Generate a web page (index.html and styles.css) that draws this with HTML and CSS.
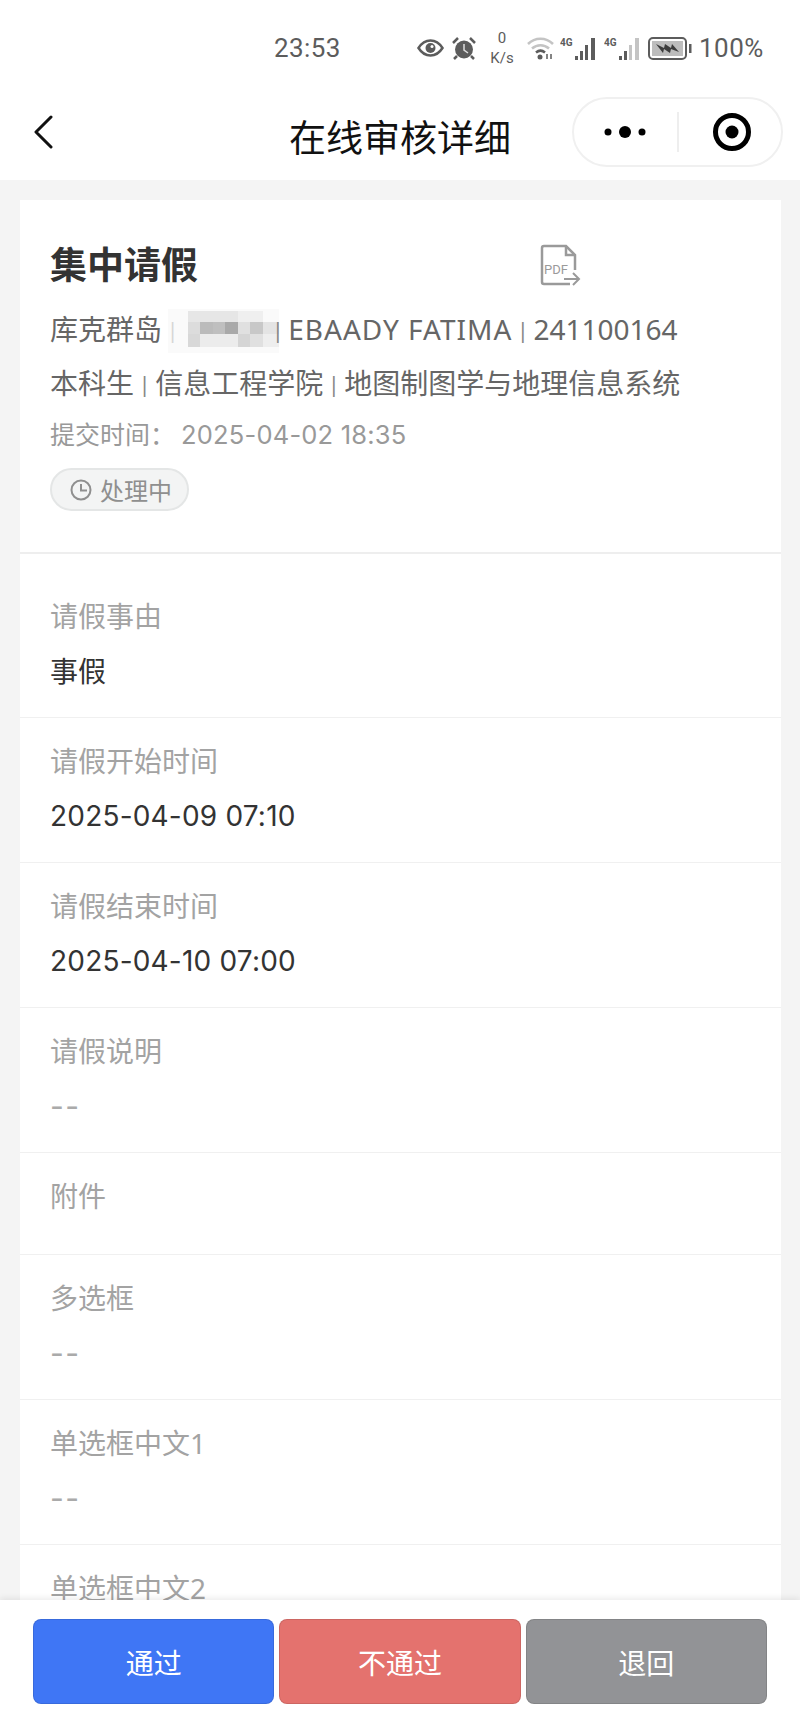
FILE: index.html
```html
<!DOCTYPE html>
<html lang="zh-CN">
<head>
    <meta charset="UTF-8">
    <meta name="viewport" content="width=device-width, initial-scale=1.0">
    <title>在线审核详细</title>
    <link rel="stylesheet" href="styles.css">
</head>
<body>
    <div class="page">
        <div class="status-bar">
            <span class="clock-time">23:53</span>
            <div class="status-icons">
                <svg class="ic-eye" width="27" height="18" viewBox="0 0 27 18"><path d="M1.5 9C5 3.5 9 1.5 13.5 1.5S22 3.5 25.500 9C22 14.500 18 16.500 13.500 16.500S5 14.500 1.500 9Z" fill="none" stroke="#5c5c5c" stroke-width="2.500"/><circle cx="13.500" cy="9" r="5" fill="#5c5c5c"/><circle cx="15" cy="7.500" r="1.500" fill="#fff"/></svg>
                <svg class="ic-alarm" width="24" height="23" viewBox="0 0 24 23"><circle cx="12" cy="12.500" r="9" fill="#5c5c5c"/><path d="M12 7v6l4 3" fill="none" stroke="#ddd" stroke-width="1.500"/><path d="M1 6l5-5M23 6l-5-5M5 19l-3 3M19 19l3 3" stroke="#5c5c5c" stroke-width="2.500"/></svg>
                <div class="net-speed"><span>0</span><span>K/s</span></div>
                <svg class="ic-wifi" width="27" height="24" viewBox="0 0 27 24"><path d="M1 8C8 1 19 1 26 8M5 12.500C10 8 17 8 22 12.500" fill="none" stroke="#c4c4c4" stroke-width="2.500"/><path d="M9 16.500c3-2.500 6-2.500 9 0" fill="none" stroke="#5c5c5c" stroke-width="2.500"/><circle cx="13" cy="21" r="2.500" fill="#5c5c5c"/><path d="M20 18v5M24 18v5" stroke="#5c5c5c" stroke-width="1.500"/></svg>
                <svg class="ic-signal" width="37" height="23" viewBox="0 0 37 23"><text x="0" y="9" class="sig-label">4G</text><path d="M15 19h3v4h-3zM20 14h3v9h-3zM25 8h3v15h-3zM31 1h4v22h-4z" fill="#5c5c5c"/></svg>
                <svg class="ic-signal" width="37" height="23" viewBox="0 0 37 23"><text x="0" y="9" class="sig-label">4G</text><path d="M15 19h3v4h-3zM20 14h3v9h-3z" fill="#5c5c5c"/><path d="M25 8h3v15h-3zM31 1h4v22h-4z" fill="#c4c4c4"/></svg>
                <svg class="ic-battery" width="44" height="23" viewBox="0 0 44 23"><rect x="1" y="1" width="37" height="21" rx="4" fill="none" stroke="#5c5c5c" stroke-width="2"/><rect x="4" y="4" width="31" height="15" fill="#bdbdbd"/><path d="M8 7l8 4 1-4 6 4 1-4 7 8-8-3-1 4-6-4-1 4z" fill="#3c3c3c"/><rect x="41" y="7" width="2.500" height="9" fill="#5c5c5c"/></svg>
                <span class="battery-text">100%</span>
            </div>
        </div>

        <div class="nav-bar">
            <svg class="back-icon" width="20" height="34" viewBox="0 0 20 34"><path d="M18 2L3 17l15 15" fill="none" stroke="#111" stroke-width="3" stroke-linecap="round" stroke-linejoin="round"/></svg>
            <h1 class="nav-title">在线审核详细</h1>
            <div class="capsule">
                <svg width="42" height="14" viewBox="0 0 42 14"><circle cx="4" cy="7" r="3.500"/><circle cx="21" cy="7" r="6"/><circle cx="38" cy="7" r="3.500"/></svg>
                <span class="capsule-line"></span>
                <svg width="40" height="40" viewBox="0 0 40 40"><circle cx="20" cy="20" r="16.500" fill="none" stroke="#000" stroke-width="5"/><circle cx="20" cy="20" r="6.500"/></svg>
            </div>
        </div>

        <div class="content">
            <div class="card">
                <div class="summary">
                    <div class="title-row">
                        <h2 class="leave-title">集中请假</h2>
                        <svg class="pdf-icon" width="42" height="42" viewBox="0 0 42 42">
                            <path d="M35 26V11L26 2H4a2 2 0 0 0-2 2v34a2 2 0 0 0 2 2h26" fill="none" stroke="#9a9a9a" stroke-width="2.500"/>
                            <path d="M26 2v9h9" fill="none" stroke="#9a9a9a" stroke-width="2.500"/>
                            <text x="4" y="30" class="pdf-text">PDF</text>
                            <path d="M24 35h15M33 29l6 6-6 6" fill="none" stroke="#9a9a9a" stroke-width="2"/>
                        </svg>
                    </div>
                    <p class="meta">库克群岛<span class="sep">|</span><svg class="mosaic" width="84" height="44" viewBox="0 0 84 44">
                        <rect x="-15" y="2" width="111" height="44" fill="#f8f8f8" fill-opacity="0.7"/>
                        <rect x="5" y="4" width="50" height="11" fill="#e6e6e6"/>
                        <rect x="55" y="4" width="25" height="11" fill="#efefef"/>
                        <rect x="5" y="15" width="12" height="12" fill="#dcdcdc"/>
                        <rect x="17" y="15" width="13" height="12" fill="#bbb"/>
                        <rect x="30" y="15" width="12" height="12" fill="#bfbfbf"/>
                        <rect x="42" y="15" width="13" height="12" fill="#a9a9a9"/>
                        <rect x="55" y="15" width="12" height="12" fill="#e0e0e0"/>
                        <rect x="67" y="15" width="13" height="12" fill="#c8c8c8"/>
                        <rect x="80" y="15" width="16" height="12" fill="#e4e4e4"/>
                        <rect x="5" y="27" width="12" height="13" fill="#d8d8d8"/>
                        <rect x="17" y="27" width="38" height="13" fill="#ececec"/>
                        <rect x="55" y="27" width="12" height="13" fill="#d5d5d5"/>
                        <rect x="67" y="27" width="13" height="13" fill="#e0e0e0"/>
                        <rect x="80" y="27" width="16" height="13" fill="#eee"/>
                    </svg><span class="sep">|</span><span class="latin">EBAADY FATIMA</span><span class="sep">|</span>241100164</p>
                    <p class="meta">本科生<span class="sep">|</span>信息工程学院<span class="sep">|</span>地图制图学与地理信息系统</p>
                    <p class="submit-time">提交时间：<span class="digits">2025-04-02 18:35</span></p>
                    <div class="tag">
                        <svg width="22" height="22" viewBox="0 0 22 22"><circle cx="11" cy="11" r="9.500" fill="none" stroke="#8f8f8f" stroke-width="2"/><path d="M11 5v6.500h6" fill="none" stroke="#8f8f8f" stroke-width="2"/></svg>
                        <span>处理中</span>
                    </div>
                </div>

                <div class="row row-first">
                    <div class="row-label">请假事由</div>
                    <div class="row-value">事假</div>
                </div>
                <div class="row">
                    <div class="row-label">请假开始时间</div>
                    <div class="row-value digits">2025-04-09 07:10</div>
                </div>
                <div class="row">
                    <div class="row-label">请假结束时间</div>
                    <div class="row-value digits">2025-04-10 07:00</div>
                </div>
                <div class="row">
                    <div class="row-label">请假说明</div>
                    <div class="row-value empty">--</div>
                </div>
                <div class="row row-file">
                    <div class="row-label">附件</div>
                </div>
                <div class="row">
                    <div class="row-label">多选框</div>
                    <div class="row-value empty">--</div>
                </div>
                <div class="row">
                    <div class="row-label">单选框中文1</div>
                    <div class="row-value empty">--</div>
                </div>
                <div class="row">
                    <div class="row-label">单选框中文2</div>
                    <div class="row-value empty">--</div>
                </div>
            </div>
        </div>

        <div class="footer">
            <button class="btn btn-pass">通过</button>
            <button class="btn btn-fail">不通过</button>
            <button class="btn btn-back">退回</button>
        </div>
    </div>
</body>
</html>
```

FILE: styles.css
```css
html, body {
    margin: 0;
    padding: 0;
}
body {
    font-family: "Noto Sans", "Noto Sans CJK SC", sans-serif;
    background-color: #f4f4f4;
    color: #333;
}
h1, h2, p {
    margin: 0;
    font-weight: normal;
}
.page {
    position: relative;
    width: 800px;
    height: 1722px;
    overflow: hidden;
}

/* status bar */
.status-bar {
    display: flex;
    align-items: center;
    height: 96px;
    padding-left: 274px;
    background-color: #fff;
    color: #5c5c5c;
    box-sizing: border-box;
}
.clock-time {
    font-family: Roboto, sans-serif;
    font-size: 26px;
    letter-spacing: 0.4px;
    width: 143px;
}
.status-icons {
    display: flex;
    align-items: center;
}
.ic-eye { margin-right: 8px; }
.ic-alarm { margin-right: 12px; }
.net-speed {
    display: flex;
    flex-direction: column;
    align-items: center;
    width: 28px;
    margin-right: 11px;
    font-family: Roboto, sans-serif;
    font-size: 15px;
    line-height: 20px;
}
.ic-wifi { margin-right: 6px; }
.ic-signal { margin-right: 7px; }
.ic-battery { margin-right: 7px; }
.sig-label {
    font-family: Roboto, sans-serif;
    font-size: 10px;
    font-weight: bold;
    fill: #5c5c5c;
}
.battery-text {
    font-family: Roboto, sans-serif;
    font-size: 26px;
    letter-spacing: 0.5px;
}

/* nav bar */
.nav-bar {
    position: relative;
    display: flex;
    align-items: center;
    justify-content: center;
    height: 84px;
    background-color: #fff;
}
.back-icon {
    position: absolute;
    left: 33px;
    top: 19px;
}
.nav-title {
    font-size: 37px;
    line-height: 50px;
    color: #111;
}
.capsule {
    position: absolute;
    left: 572px;
    top: 1px;
    display: flex;
    align-items: center;
    width: 211px;
    height: 70px;
    border: 2px solid #f0f0f0;
    border-radius: 36px;
    box-sizing: border-box;
    background-color: #fff;
    padding-left: 30px;
}
.capsule-line {
    width: 2px;
    height: 40px;
    background-color: #eee;
    margin: 0 33px 0 31px;
}

/* card */
.content {
    padding: 20px 19px 0 20px;
}
.card {
    background-color: #fff;
}
.summary {
    padding: 40px 30px 41px;
    border-bottom: 2px solid #eee;
}
.title-row {
    display: flex;
    align-items: center;
    height: 50px;
}
.leave-title {
    font-size: 37px;
    line-height: 50px;
    font-weight: bold;
    color: #333;
    width: 490px;
}
.pdf-text {
    font-family: Roboto, sans-serif;
    font-size: 13px;
    fill: #9a9a9a;
}
.meta {
    display: flex;
    align-items: center;
    font-size: 28px;
    line-height: 54px;
    height: 54px;
    color: #666;
    white-space: nowrap;
}
.meta:nth-of-type(1) {
    margin-top: 12px;
}
.sep {
    margin: 0 4.500px;
    font-size: 22px;
    color: #888;
}
.latin {
    letter-spacing: 1px;
}
.mosaic {
    overflow: visible;
}
.digits {
    font-family: Inter, "Noto Sans CJK SC", sans-serif;
    letter-spacing: 0.2px;
}
.submit-time {
    font-size: 25px;
    line-height: 48px;
    color: #999;
    white-space: nowrap;
}
.submit-time .digits {
    font-size: 25.500px;
    margin-left: 6px;
}
.tag {
    display: flex;
    align-items: center;
    gap: 8px;
    width: 139px;
    height: 43px;
    margin-top: 9px;
    padding-left: 18px;
    box-sizing: border-box;
    background-color: #f3f4f4;
    border: 2px solid #e4e6e6;
    border-radius: 22px;
    font-size: 24px;
    color: #8f8f8f;
}

/* rows */
.row {
    padding: 21px 30px 24px;
    border-bottom: 1px solid #f0f0f0;
}
.row-first {
    padding-top: 40px;
}
.row-file {
    padding-bottom: 36px;
}
.row-label {
    font-size: 28px;
    line-height: 44px;
    color: #a3a3a3;
}
.row-value {
    font-size: 28px;
    line-height: 44px;
    margin-top: 11px;
    color: #333;
}
.row-value.empty {
    color: #aaa;
    letter-spacing: 1.500px;
    font-size: 30px;
    font-family: Inter, sans-serif;
}

/* bottom buttons */
.footer {
    position: absolute;
    left: 0;
    right: 0;
    bottom: 0;
    display: flex;
    gap: 5px;
    height: 122px;
    padding: 19px 33px 18px;
    box-sizing: border-box;
    background-color: #fff;
    box-shadow: 0 -2px 6px rgba(0, 0, 0, 0.08);
}
.btn {
    flex: 1;
    border: 1px solid rgba(0, 0, 0, 0.1);
    border-radius: 8px;
    color: #fff;
    font-family: inherit;
    font-size: 28px;
}
.btn-pass { background-color: #3f76f5; }
.btn-fail { background-color: #e4726e; }
.btn-back { background-color: #929396; }
```
